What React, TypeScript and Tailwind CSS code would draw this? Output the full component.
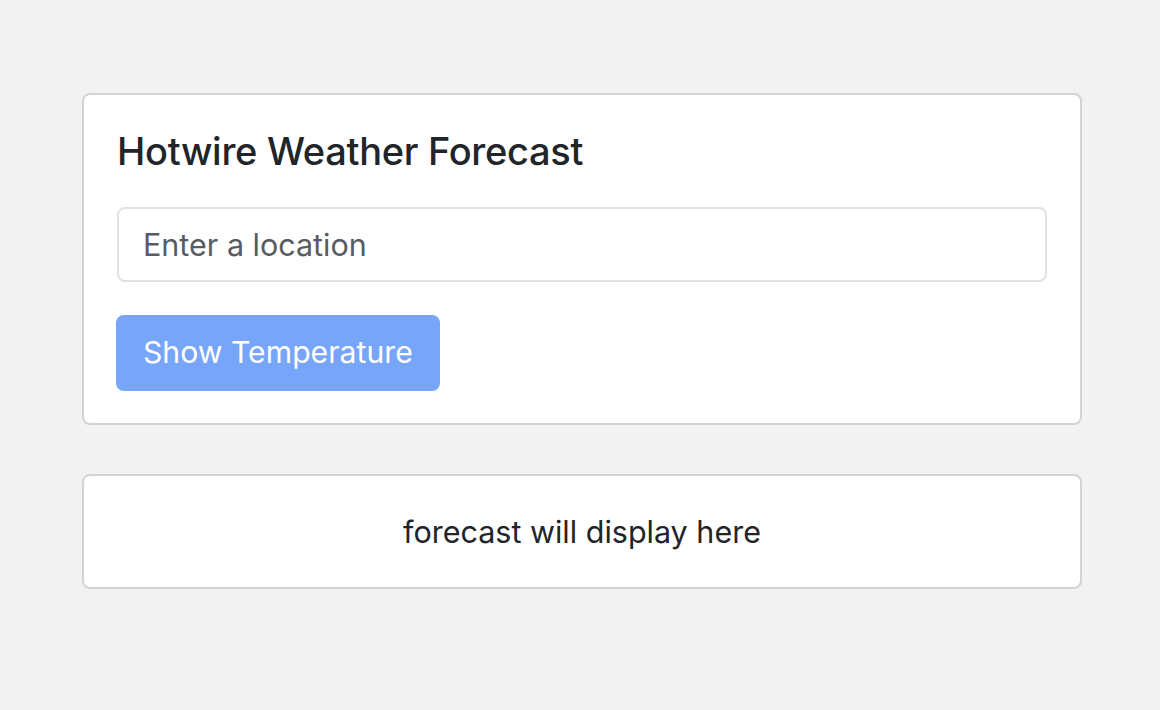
export default function App() {
  return (
    <div
      className="min-h-[710px] w-full bg-[#f2f2f2] pt-[93px] px-[82px]"
      style={{ fontFamily: "Inter, 'Liberation Sans', sans-serif" }}
    >
      <div className="w-[1000px] rounded-[8px] border-2 border-[#d3d3d4] bg-white px-[33px] pt-[34px] pb-[32px]">
        <h3 className="text-[38px] leading-[44px] font-medium text-[#212529] tracking-[-0.3px]">
          Hotwire Weather Forecast
        </h3>
        <input
          type="text"
          placeholder="Enter a location"
          className="mt-[34px] block w-full h-[75px] rounded-[8px] border-2 border-[#dee2e6] bg-white px-[24px] text-[30.5px] text-[#212529] placeholder:text-[#595c5f] outline-none"
        />
        <button className="mt-[33px] -ml-px h-[76px] rounded-[8px] bg-[#77a5f9] px-[27px] text-[30.2px] text-white">
          Show Temperature
        </button>
      </div>
      <div className="mt-[49px] w-[1000px] h-[115px] rounded-[8px] border-2 border-[#d3d3d4] bg-white flex items-center justify-center">
        <p className="text-[30.5px] text-[#212529]">forecast will display here</p>
      </div>
    </div>
  );
}
